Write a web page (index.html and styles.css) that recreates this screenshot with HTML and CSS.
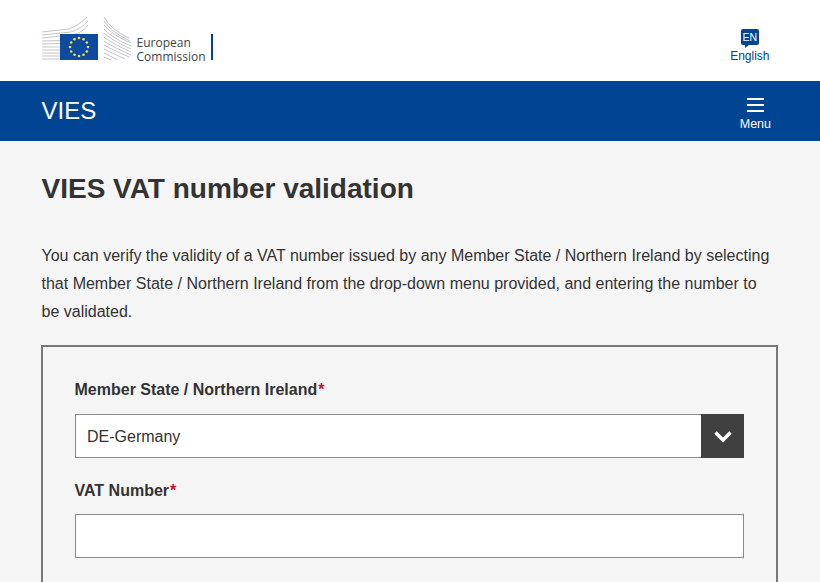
FILE: index.html
```html
<!DOCTYPE html>
<html lang="en">
<head>
<meta charset="utf-8">
<title>VIES VAT number validation</title>
<link rel="stylesheet" href="styles.css">
</head>
<body>
<header class="site-header">
  <div class="logo">
    <svg class="logo-mark" width="134" height="50" viewBox="0 0 134 50">
      <g fill="none" stroke="#c2c5c9" stroke-width="1">
        <path d="M1 20L28 17Q38 14 46 5M1 23L30 20Q40 17 47 9M1 26L33 22.500Q42 20 47 13M1 29L19 28.500M1 32L19 31.500M1 35L19 35M1 38L19 38M1 41L19 41M1 44L19 44M1 47L19 47"/>
        <path d="M63 5Q70 18 88 26M63 9Q70 20 89 29M63 13Q71 23 90 31M63 17Q71 26 90 34M63 21Q72 29 90 37M63 25Q72 32 90 40M63 29Q72 35 90 43M63 33Q72 38 88 45M63 37L84 47M63 41L76 47.500M63 45L70 48"/>
      </g>
      <rect x="19" y="22" width="38" height="26" fill="#0e4a9e"/>
      <g fill="#f0dc50">
        <circle cx="38" cy="26" r="1.300"/><circle cx="42.500" cy="27.200" r="1.300"/><circle cx="45.800" cy="30.500" r="1.300"/><circle cx="47" cy="35" r="1.300"/><circle cx="45.800" cy="39.500" r="1.300"/><circle cx="42.500" cy="42.800" r="1.300"/><circle cx="38" cy="44" r="1.300"/><circle cx="33.500" cy="42.800" r="1.300"/><circle cx="30.200" cy="39.500" r="1.300"/><circle cx="29" cy="35" r="1.300"/><circle cx="30.200" cy="30.500" r="1.300"/><circle cx="33.500" cy="27.200" r="1.300"/>
      </g>
    </svg>
    <div class="logo-text"><span>European</span><span>Commission</span></div>
    <div class="logo-bar"></div>
  </div>
  <a class="lang">
    <span class="lang-badge">EN</span>
    <span class="lang-name">English</span>
  </a>
</header>
<nav class="site-nav">
  <span class="site-name">VIES</span>
  <a class="menu">
    <span class="menu-icon"><i></i><i></i><i></i></span>
    <span class="menu-label">Menu</span>
  </a>
</nav>
<main class="content">
  <h1 class="title">VIES VAT number validation</h1>
  <p class="intro">You can verify the validity of a VAT number issued by any Member State / Northern Ireland by selecting that Member State / Northern Ireland from the drop-down menu provided, and entering the number to be validated.</p>
  <form class="panel">
    <label class="field-label">Member State / Northern Ireland<span class="req">*</span></label>
    <div class="select">
      <span class="select-value">DE-Germany</span>
      <span class="select-btn">
        <svg width="18" height="13" viewBox="0 0 18 13"><path d="M1.500 2.500L9 10L16.500 2.500" fill="none" stroke="#fff" stroke-width="3.500"/></svg>
      </span>
    </div>
    <label class="field-label second">VAT Number<span class="req">*</span></label>
    <div class="input"></div>
  </form>
</main>
</body>
</html>
```
FILE: styles.css
```css
* { box-sizing: border-box; }
html, body { margin: 0; height: 582px; overflow: hidden; }
body { background: #f5f5f5; color: #333; font-family: "Liberation Sans", Arial, sans-serif; }

.site-header { height: 81px; background: #fff; display: flex; justify-content: space-between; padding: 0 50.500px 0 41px; }
.logo { display: flex; align-items: flex-start; padding-top: 12px; }
.logo-mark { display: block; }
.logo-text { display: flex; flex-direction: column; margin: 24px 0 0 -38.500px; font-family: "Open Sans", sans-serif; font-size: 12px; line-height: 14px; color: #3f4449; }
.logo-bar { width: 2px; height: 26px; background: #004494; margin: 22px 0 0 5.500px; }

.lang { display: flex; flex-direction: column; align-items: center; padding-top: 29px; color: #004494; font-size: 12px; }
.lang-badge { position: relative; width: 18px; height: 16px; background: #004494; color: #fff; border-radius: 2px; font-size: 10.500px; line-height: 16px; text-align: center; }
.lang-badge::after { content: ""; position: absolute; left: 4px; top: 16px; border-top: 3px solid #004494; border-right: 4px solid transparent; }
.lang-name { margin-top: 4px; line-height: 15px; }

.site-nav { height: 60px; background: #004494; color: #fff; display: flex; justify-content: space-between; padding: 0 49px 0 41.500px; border-top: 1px solid #0b3f86; }
.site-name { font-size: 24px; line-height: 58px; }
.menu { display: flex; flex-direction: column; align-items: center; padding-top: 16px; }
.menu-icon { display: flex; flex-direction: column; gap: 4px; width: 17px; }
.menu-icon i { display: block; height: 2px; background: #fff; }
.menu-label { font-size: 12.500px; line-height: 14px; margin-top: 5px; }

.content { padding: 0 42px 0 41px; }
.title { margin: 31px 0 0 0.500px; font-size: 28px; line-height: 34px; font-weight: 700; color: #333; }
.intro { margin: 36px 0 0 0.500px; font-size: 16px; line-height: 28px; color: #333; }
.panel { margin-top: 19px; height: 300px; border: 2px solid #777; border-bottom: 0; padding: 31px 32px 0; }
.field-label { display: block; margin-left: -0.500px; font-size: 16px; font-weight: 700; line-height: 24px; color: #333; }
.field-label.second { margin-top: 21px; }
.req { color: #c8102e; margin-left: 1px; }
.select { margin-top: 12px; height: 44px; background: #fff; border: 1px solid #8a8a8a; display: flex; justify-content: space-between; align-items: stretch; }
.select-value { padding-left: 11px; font-size: 16px; line-height: 43px; }
.select-btn { width: 43px; margin: -1px -1px -1px 0; background: #404040; display: flex; align-items: center; justify-content: center; }
.input { margin-top: 11px; height: 44px; background: #fff; border: 1px solid #8a8a8a; }
```
